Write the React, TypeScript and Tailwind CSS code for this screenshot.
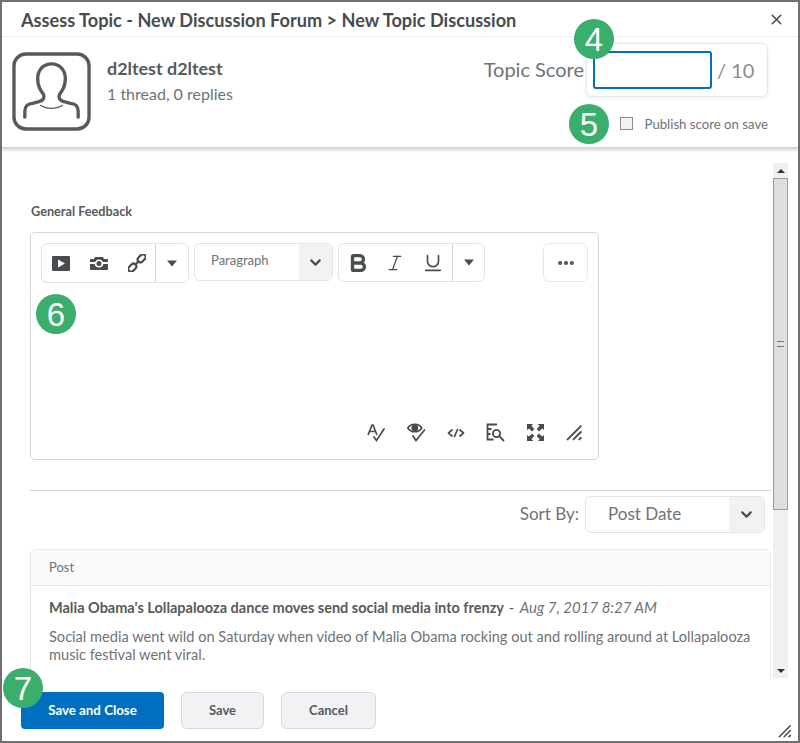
import { X, ChevronDown, Bold, Italic, Underline, Ellipsis } from "lucide-react";

function Badge({ n, className }: { n: string; className: string }) {
  return (
    <div className={`absolute flex h-[40px] w-[40px] items-center justify-center rounded-full bg-[#3aae6c] text-[33px] leading-none text-white font-['Liberation_Sans',sans-serif] ${className}`}>
      {n}
    </div>
  );
}

function Caret() {
  return (
    <svg width="12" height="7" viewBox="0 0 12 7">
      <path d="M1 0.5h10L6 6.5z" fill="#494c4e" />
    </svg>
  );
}

function ResizeGrip({ size = 16 }: { size?: number }) {
  return (
    <svg width={size} height={size} viewBox="0 0 16 16" fill="none" stroke="#494c4e" strokeWidth="1.8" strokeLinecap="round">
      <path d="M1.5 14.5 14 2M7 14.5l7-7M12.5 14.5l1.5-1.5" />
    </svg>
  );
}

function PersonIcon() {
  return (
    <svg width="79" height="79" viewBox="0 0 80 80" fill="none" stroke="#565a5c" strokeWidth="3.4" strokeLinecap="round">
      <rect x="2" y="2" width="76" height="76" rx="12" />
      <path d="M13 66V60c0-5 3-8 8-8l7-2c4-1 5-4 4-7-3-4-6-8-6-16 0-9 6-15 14-15s14 6 14 15c0 8-3 12-6 16-1 3 0 6 4 7l7 2c5 0 8 3 8 8v6" />
      <path d="M29 54c5 4 17 4 22 0" strokeWidth="1.3" />
    </svg>
  );
}

function ChainIcon() {
  return (
    <svg width="18" height="18" viewBox="0 0 18 18" fill="none" stroke="#494c4e" strokeWidth="2.2">
      <rect x="9.2" y="1.5" width="9" height="5.6" rx="2.8" transform="rotate(-45 13.7 4.3)" />
      <rect x="-0.2" y="10.9" width="9" height="5.6" rx="2.8" transform="rotate(-45 4.3 13.7)" />
      <path d="M6.8 11.2 11.2 6.8" />
    </svg>
  );
}

export default function App() {
  return (
    <div className="relative flex h-[743px] w-[800px] flex-col overflow-hidden border-2 border-[#6f6f6f] bg-white font-['Lato',sans-serif] text-[#565a5c]">
      {/* title */}
      <div className="flex h-[35px] shrink-0 items-center justify-between border-b border-[#f0f1f2] pl-[19px] pr-[13px]">
        <h1 className="pt-[2px] text-[18.15px] font-bold leading-none text-[#494c4e]">Assess Topic - New Discussion Forum &gt; New Topic Discussion</h1>
        <X size={17} strokeWidth={2.2} className="text-[#494c4e]" />
      </div>

      {/* learner + score */}
      <div className="flex h-[111px] shrink-0 justify-between border-b border-[#d3d5d6] pl-[10px] pr-[30px] shadow-[0_2px_3px_rgba(0,0,0,0.18)]">
        <div className="flex gap-[15px] pt-[15px]">
          <div className="h-[80px] w-[80px]"><PersonIcon /></div>
          <div className="pt-[5px]">
            <div className="text-[17.9px] font-bold leading-[22px] text-[#565a5c]">d2ltest d2ltest</div>
            <div className="mt-[5px] text-[16px] leading-[20px] text-[#6e7376]">1 thread, 0 replies</div>
          </div>
        </div>
        <div className="flex flex-col items-end pt-[6px]">
          <div className="flex items-center">
            <span className="mb-[2px] mr-[2px] text-[20px] text-[#6e7376]">Topic Score</span>
            <div className="flex h-[54px] w-[182px] items-center rounded-[6px] border border-[#e3e9f1] bg-white pl-[6px] shadow-[0_1px_4px_rgba(0,0,0,0.08)]">
              <div className="h-[38px] w-[119px] rounded-[3px] border-2 border-[#006fbf] bg-white" />
              <span className="ml-[5px] text-[20px] text-[#8a8d90]">/ 10</span>
            </div>
          </div>
          <div className="mt-[18px] flex items-center">
            <span className="-mt-[2px] h-[13px] w-[13px] border border-[#8d8d8d] bg-[#f2f2f2]" />
            <span className="ml-[12px] text-[13.2px] text-[#6e7376]">Publish score on save</span>
          </div>
        </div>
      </div>

      {/* scrolling body */}
      <div className="flex min-h-0 flex-1 overflow-hidden">
        <div className="ml-[28px] w-[741px] shrink-0">
          <div className="ml-[1px] mt-[55px] text-[12.7px] font-bold leading-[16px] text-[#565a5c]">General Feedback</div>
          <div className="mt-[13px] flex h-[228px] w-[569px] flex-col rounded-[5px] border border-[#d3d5d6] px-[10px] pt-[10px]">
            <div className="flex items-start">
              <div className="flex h-[40px] w-[149px] items-center rounded-[6px] border border-[#e0e3e6]">
                <svg className="ml-[10px]" width="18" height="15" viewBox="0 0 18 15">
                  <path fillRule="evenodd" d="M1 0h16a1 1 0 0 1 1 1v13a1 1 0 0 1-1 1H1a1 1 0 0 1-1-1V1a1 1 0 0 1 1-1zm5 3.5v8l7-4z" fill="#494c4e" />
                </svg>
                <svg className="ml-[20px]" width="18" height="13" viewBox="0 0 18 13">
                  <path fillRule="evenodd" d="M5 0h8l1 2h3a1 1 0 0 1 1 1v2h-5a4.5 4.5 0 0 0-8 0H0V3a1 1 0 0 1 1-1h3zM0 7h4.6a4.5 4.5 0 0 0 8.8 0H18v5a1 1 0 0 1-1 1H1a1 1 0 0 1-1-1zm9-3a2.5 2.5 0 1 1 0 5 2.5 2.5 0 0 1 0-5z" fill="#494c4e" />
                </svg>
                <div className="ml-[20px]"><ChainIcon /></div>
                <div className="ml-[9px] flex h-full flex-1 items-center justify-center border-l border-[#d3d5d6]"><Caret /></div>
              </div>
              <div className="ml-[5px] flex h-[38px] w-[140px] overflow-hidden rounded-[6px] border border-[#e0e3e6]">
                <div className="flex-1 pl-[16px] text-[13px] leading-[33px] text-[#6e7376]">Paragraph</div>
                <div className="flex w-[33px] items-center justify-center bg-[#f1f2f4]"><ChevronDown size={17} strokeWidth={3} className="text-[#494c4e]" /></div>
              </div>
              <div className="ml-[5px] flex h-[39px] w-[148px] items-center rounded-[6px] border border-[#e0e3e6]">
                <Bold className="ml-[8px] text-[#494c4e]" size={22} strokeWidth={3.6} />
                <Italic className="ml-[16px] text-[#494c4e]" size={20} strokeWidth={1.5} />
                <Underline className="ml-[17px] text-[#494c4e]" size={22} strokeWidth={1.8} />
                <div className="ml-[8px] flex h-full flex-1 items-center justify-center border-l border-[#d3d5d6]"><Caret /></div>
              </div>
              <div className="ml-[58px] flex h-[39px] w-[45px] items-center justify-center rounded-[6px] border border-[#e3e9f1]">
                <Ellipsis size={20} strokeWidth={3} className="text-[#494c4e]" />
              </div>
            </div>
            <div className="mb-[17px] mt-auto flex items-center justify-end gap-[21px] pr-[5px] text-[#494c4e]">
              <svg width="19" height="19" viewBox="0 0 19 19" fill="none" stroke="currentColor" strokeWidth="1.7">
                <path d="M1 12 5 2h1l4 10M2.6 8.5h5.8" />
                <path d="M7 14l2.5 3.5L17 6" strokeLinecap="round" />
              </svg>
              <svg width="19" height="19" viewBox="0 0 19 19" fill="none" stroke="currentColor" strokeWidth="1.7">
                <path d="M0.8 5c3-5 11-5 14 0-3 5-11 5-14 0z" />
                <circle cx="7.8" cy="5" r="2.6" fill="currentColor" />
                <path d="M6 13l3 4.5L17.5 7" strokeLinecap="round" />
              </svg>
              <svg width="18" height="18" viewBox="0 0 18 18" fill="none" stroke="currentColor" strokeWidth="1.7" strokeLinecap="round" strokeLinejoin="round">
                <path d="M5 6 1.5 9 5 12M13 6l3.5 3-3.5 3M10.5 5.5l-3 7" />
              </svg>
              <svg width="19" height="19" viewBox="0 0 19 19" fill="none" stroke="currentColor" strokeWidth="1.8">
                <path d="M11 1.5H1.5v15h6M1.5 6h4M1.5 11h3" />
                <circle cx="10.5" cy="10.5" r="3.6" />
                <path d="m13.2 13.2 4.3 4.3" strokeLinecap="round" />
              </svg>
              <svg width="19" height="19" viewBox="0 0 19 19" fill="currentColor">
                <path d="M1 1h6L5.4 3l3 3L6 8.4l-3-3L1 7zM18 1v6l-2-1.6-3 3L10.6 6l3-3L11.6 1zM1 18v-6l2 1.6 3-3L8.4 13l-3 3 2 2zM18 18h-6l1.6-2-3-3 2.4-2.4 3 3 2-1.6z" />
              </svg>
              <ResizeGrip size={17} />
            </div>
          </div>

          <div className="mt-[30px] border-t border-[#d3d5d6]" />
          <div className="mr-[6px] mt-[5px] flex items-center justify-end">
            <span className="mb-[2px] mr-[6px] text-[17px] text-[#6e7376]">Sort By:</span>
            <div className="flex h-[37px] w-[180px] overflow-hidden rounded-[6px] border border-[#e0e3e6]">
              <div className="flex-1 pl-[22px] text-[17px] leading-[34px] text-[#6e7376]">Post Date</div>
              <div className="flex w-[35px] items-center justify-center bg-[#f1f2f4]"><ChevronDown size={17} strokeWidth={3} className="text-[#494c4e]" /></div>
            </div>
          </div>

          <div className="mt-[16px] rounded-t-[6px] border border-[#e3e9f1]">
            <div className="h-[36px] rounded-t-[6px] border-b border-[#e3e9f1] bg-[#f9fafb] pl-[18px] text-[13px] leading-[35px] text-[#6e7376]">Post</div>
            <div className="px-[18px] pb-[30px] pt-[11px]">
              <div className="whitespace-nowrap text-[14.5px] leading-[20px] text-[#565a5c]">
                <b className="mr-[1px]">Malia Obama's Lollapalooza dance moves send social media into frenzy</b> - <i className="ml-[2px] text-[15px] text-[#6e7376]">Aug 7, 2017 8:27 AM</i>
              </div>
              <p className="mt-[10px] text-[14.6px] leading-[18px] text-[#6e7376]">
                Social media went wild on Saturday when video of Malia Obama rocking out and rolling around at Lollapalooza music festival went viral.
              </p>
            </div>
          </div>
        </div>

        {/* scrollbar */}
        <div className="ml-[2px] mt-[15px] flex h-[515px] w-[15px] shrink-0 flex-col bg-[#f0f0f0]">
          <div className="flex h-[15px] items-center justify-center"><div className="h-0 w-0 border-x-[4px] border-b-[4px] border-x-transparent border-b-[#333]" /></div>
          <div className="flex h-[332px] items-center justify-center border border-[#9c9c9c] bg-[#dedede]">
            <div className="h-[6px] w-[7px] border-y border-[#777]" />
          </div>
          <div className="mt-auto flex h-[15px] items-center justify-center"><div className="h-0 w-0 border-x-[4px] border-t-[4px] border-x-transparent border-t-[#333]" /></div>
        </div>
      </div>

      {/* footer */}
      <div className="flex h-[61px] shrink-0 items-start bg-white pl-[19px] pt-[12px]">
        <button className="h-[37px] w-[143px] rounded-[4px] bg-[#006fbf] text-[13.3px] font-bold text-white">Save and Close</button>
        <button className="ml-[17px] h-[37px] w-[83px] rounded-[6px] border border-[#d3d9e3] bg-[#f1f2f4] text-[13px] font-bold text-[#565a5c]">Save</button>
        <button className="ml-[17px] h-[37px] w-[95px] rounded-[6px] border border-[#d3d9e3] bg-[#f1f2f4] text-[13px] font-bold text-[#565a5c]">Cancel</button>
      </div>
      <div className="absolute bottom-[3px] right-[6px]"><ResizeGrip size={14} /></div>

      <Badge n="4" className="left-[572px] top-[17px]" />
      <Badge n="5" className="left-[567px] top-[102px]" />
      <Badge n="6" className="left-[34px] top-[292px]" />
      <Badge n="7" className="left-[1px] top-[666px]" />
    </div>
  );
}
